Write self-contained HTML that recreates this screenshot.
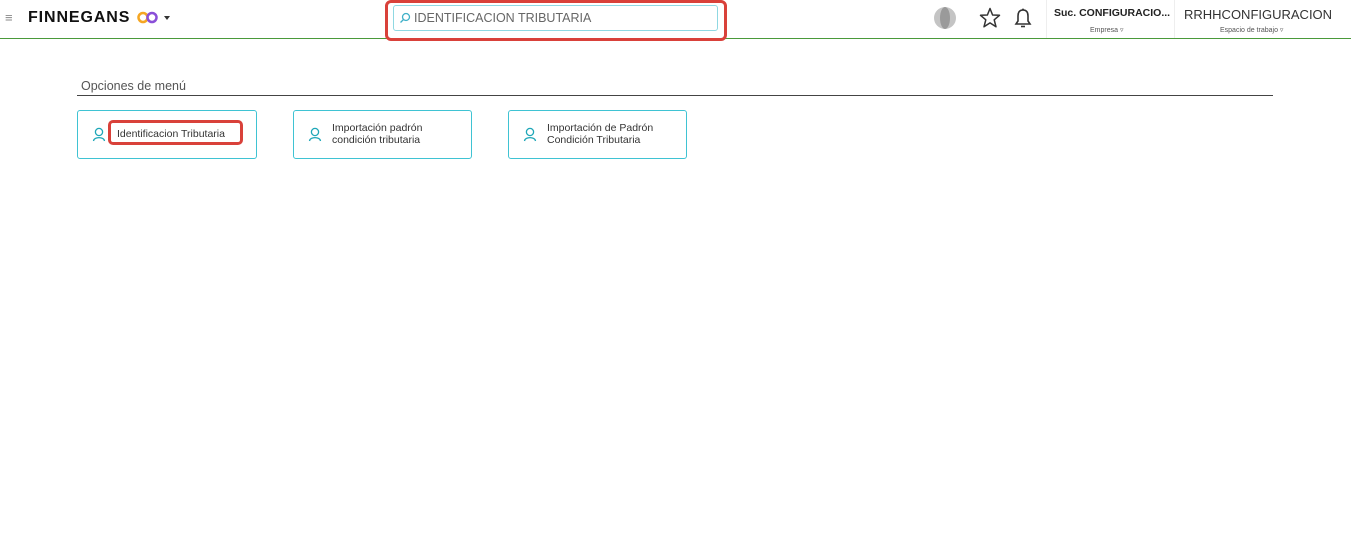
<!DOCTYPE html>
<html><head><meta charset="utf-8"><style>
*{box-sizing:border-box;margin:0;padding:0}
body{width:1351px;height:555px;background:#fff;font-family:"Liberation Sans",sans-serif;position:relative;overflow:hidden;color:#222}
.a{position:absolute}
.card{position:absolute;top:110px;width:180px;height:49px;border:1px solid #3fc3d3;border-radius:3px;font-size:10.5px;color:#333;line-height:12px}
.card svg{position:absolute;left:14px;top:16px}
.card .t{position:absolute;left:38px;top:11px}
</style></head><body>
<div class="a" style="left:0;top:38px;width:1351px;height:1px;background:#4a9a3a"></div>
<div class="a" style="left:5px;top:10px;font-size:13px;color:#888">≡</div>
<div class="a" style="left:28px;top:9px;font-size:16px;font-weight:bold;color:#111;letter-spacing:0.9px">FINNEGANS</div>
<svg class="a" style="left:137px;top:11px" width="22" height="13"><circle cx="6" cy="6.5" r="4.5" fill="none" stroke="#f5a623" stroke-width="2.5"/><circle cx="15" cy="6.5" r="4.5" fill="none" stroke="#8a4fd8" stroke-width="2.5"/></svg>
<div class="a" style="left:164px;top:16px;width:0;height:0;border-left:3.5px solid transparent;border-right:3.5px solid transparent;border-top:4px solid #333"></div>
<div class="a" style="left:385px;top:0;width:342px;height:41px;border:3px solid #d9413a;border-radius:6px"></div>
<div class="a" style="left:393px;top:5px;width:325px;height:26px;border:1px solid #8fd8e2;border-radius:3px"></div>
<svg class="a" style="left:399px;top:12px" width="12" height="12"><circle cx="7" cy="5" r="3.5" fill="none" stroke="#3fb0c8" stroke-width="1.3"/><line x1="4.5" y1="7.5" x2="1.5" y2="10.5" stroke="#3fb0c8" stroke-width="1.3"/></svg>
<div class="a" style="left:414px;top:11px;font-size:12.5px;color:#666">IDENTIFICACION TRIBUTARIA</div>
<svg class="a" style="left:932px;top:6px" width="26" height="24"><ellipse cx="13" cy="12" rx="11" ry="11" fill="#c4c4c4"/><ellipse cx="13" cy="12" rx="5" ry="11" fill="#9a9a9a"/></svg>
<svg class="a" style="left:979px;top:7px" width="22" height="22"><polygon points="11,1.5 13.6,8 20.5,8.3 15.2,12.8 17,19.8 11,15.9 5,19.8 6.8,12.8 1.5,8.3 8.4,8" fill="none" stroke="#333" stroke-width="1.5" stroke-linejoin="round"/></svg>
<svg class="a" style="left:1014px;top:8px" width="18" height="22"><path d="M9 2 C5 2 4 5 4 8 V13 L2 16 H16 L14 13 V8 C14 5 13 2 9 2Z" fill="none" stroke="#333" stroke-width="1.6"/><path d="M7 18.5 H11" stroke="#333" stroke-width="1.6"/><circle cx="9" cy="1.5" r="1" fill="#333"/></svg>
<div class="a" style="left:1046px;top:0;width:1px;height:38px;background:#eee"></div>
<div class="a" style="left:1174px;top:0;width:1px;height:38px;background:#eee"></div>
<div class="a" style="left:1054px;top:7px;font-size:10.5px;font-weight:bold;color:#222">Suc. CONFIGURACIO...</div>
<div class="a" style="left:1090px;top:26px;font-size:7px;color:#555">Empresa ▿</div>
<div class="a" style="left:1184px;top:7px;font-size:13px;color:#333">RRHHCONFIGURACION</div>
<div class="a" style="left:1220px;top:26px;font-size:7px;color:#555">Espacio de trabajo ▿</div>
<div class="a" style="left:81px;top:79px;font-size:12.5px;color:#555">Opciones de menú</div>
<div class="a" style="left:77px;top:95px;width:1196px;height:1px;background:#444"></div>
<div class="card" style="left:77px"><svg width="14" height="15"><circle cx="7" cy="5" r="3.6" fill="none" stroke="#1ea7b8" stroke-width="1.3"/><path d="M1.5 14 C2 9.5 12 9.5 12.5 14" fill="none" stroke="#1ea7b8" stroke-width="1.3"/></svg><div class="t" style="top:17px;left:39px">Identificacion Tributaria</div></div>
<div class="a" style="left:108px;top:120px;width:135px;height:25px;border:3px solid #d9413a;border-radius:5px"></div>
<div class="card" style="left:293px;width:179px"><svg width="14" height="15"><circle cx="7" cy="5" r="3.6" fill="none" stroke="#1ea7b8" stroke-width="1.3"/><path d="M1.5 14 C2 9.5 12 9.5 12.5 14" fill="none" stroke="#1ea7b8" stroke-width="1.3"/></svg><div class="t">Importación padrón<br>condición tributaria</div></div>
<div class="card" style="left:508px;width:179px"><svg width="14" height="15"><circle cx="7" cy="5" r="3.6" fill="none" stroke="#1ea7b8" stroke-width="1.3"/><path d="M1.5 14 C2 9.5 12 9.5 12.5 14" fill="none" stroke="#1ea7b8" stroke-width="1.3"/></svg><div class="t">Importación de Padrón<br>Condición Tributaria</div></div>
</body></html>
